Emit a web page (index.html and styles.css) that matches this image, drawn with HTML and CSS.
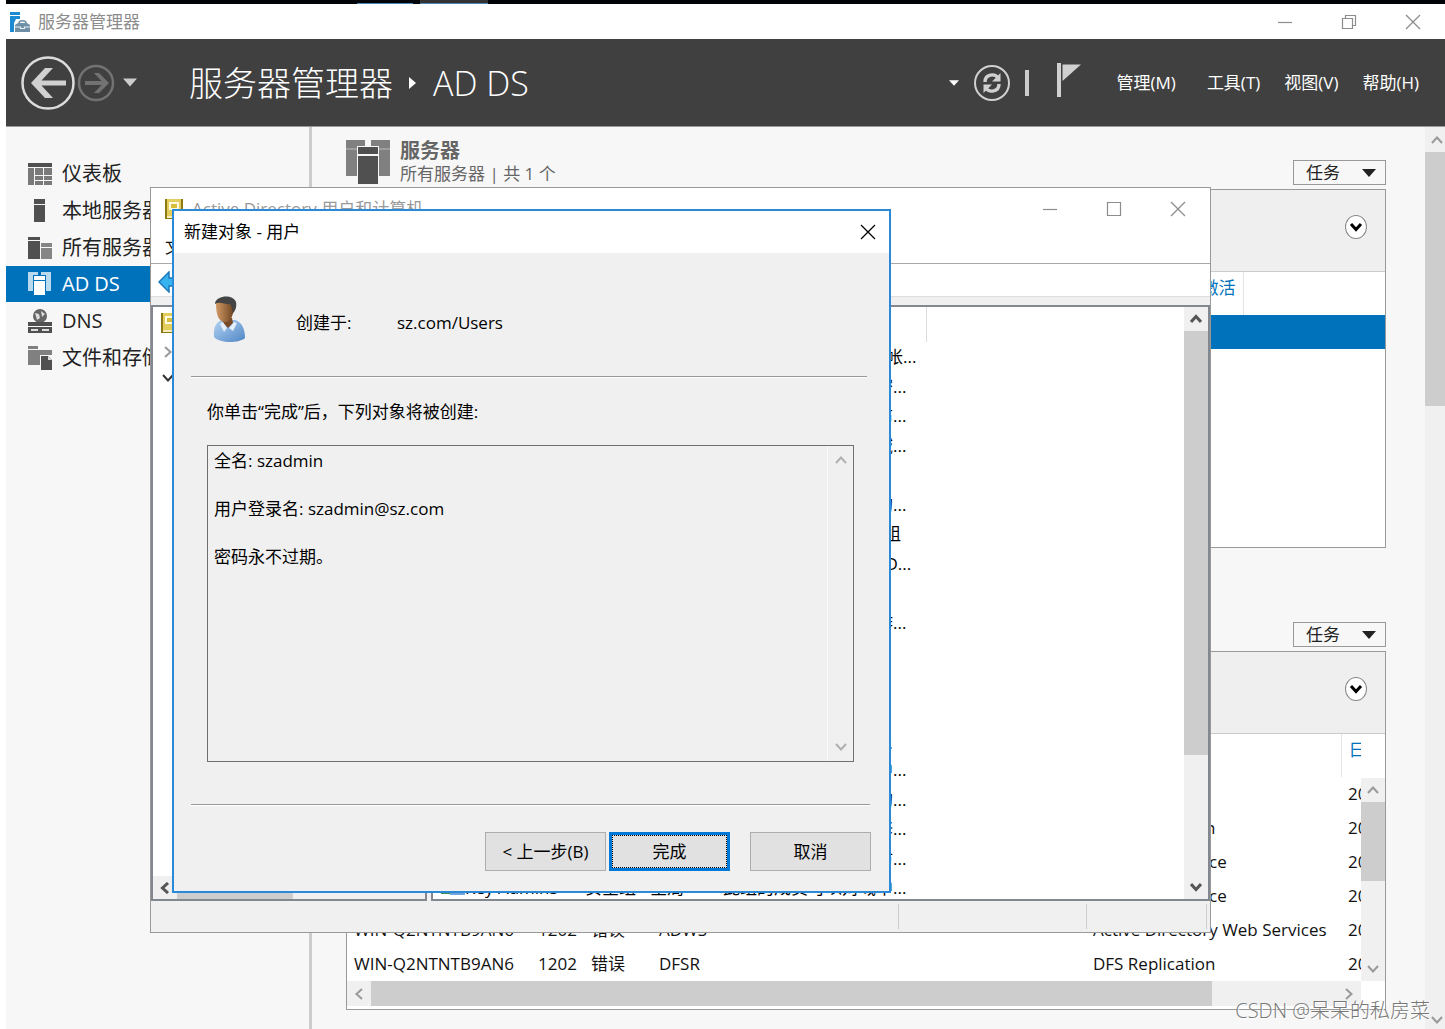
FILE: index.html
```html
<!DOCTYPE html>
<html lang="zh-CN">
<head>
<meta charset="utf-8">
<meta name="viewport" content="width=device-width, initial-scale=1">
<title>服务器管理器</title>
<link rel="stylesheet" href="styles.css">
</head>
<body>
<svg class="defs" aria-hidden="true">
  <symbol id="chev-up" viewBox="0 0 12 12"><path d="M1 9 6 3.5 11 9" fill="none" stroke="currentColor"/></symbol>
  <symbol id="chev-down" viewBox="0 0 12 12"><path d="M1 3 6 8.5 11 3" fill="none" stroke="currentColor"/></symbol>
  <symbol id="chev-left" viewBox="0 0 12 12"><path d="M9 1 3.5 6 9 11" fill="none" stroke="currentColor"/></symbol>
  <symbol id="chev-right" viewBox="0 0 12 12"><path d="M3 1 8.5 6 3 11" fill="none" stroke="currentColor"/></symbol>
  <symbol id="close" viewBox="0 0 16 16"><path d="M1 1 15 15M15 1 1 15" fill="none" stroke="currentColor" stroke-width="1.3"/></symbol>
  <symbol id="min" viewBox="0 0 16 16"><path d="M1 8.5H15" fill="none" stroke="currentColor" stroke-width="1.2"/></symbol>
  <symbol id="max" viewBox="0 0 16 16"><path d="M1.5 1.5h13v13h-13z" fill="none" stroke="currentColor" stroke-width="1.2"/></symbol>
  <symbol id="restore" viewBox="0 0 16 16"><path d="M1.5 4.5h10v10h-10zM4.5 4.500V1.500h10v10h-3" fill="none" stroke="currentColor" stroke-width="1.2"/></symbol>
  <symbol id="tri" viewBox="0 0 14 8"><path d="M0 0H14L7 8z" fill="currentColor"/></symbol>
  <symbol id="book" viewBox="0 0 18 22"><path d="M0 1h18v20H0z" fill="#8d7a14"/><path d="M2 1h14v17H2z" fill="#e3cd5d"/><path d="M4 4h10v8H4z" fill="#fffbe0"/><path d="M6 6h6v4H6z" fill="#d8bd3c"/><path d="M2 18h15v2H2z" fill="#f6eeb8"/></symbol>
</svg>

<div class="desktop">
  <div class="host-bar"><span class="host-tab"></span><span class="host-tab wide"></span></div>

  <div class="manager">
    <header class="titlebar">
      <svg class="app-icon" viewBox="0 0 20 20"><path d="M0 0h10v3H0zM0 4h10v3H6l-2 4v9H0z" fill="#1b8ad3"/><path d="M5 13l3-2h9l3 2v7H5z" fill="#6f8fa6"/><path d="M9 11c0-3 7-3 7 0" fill="none" stroke="#6f8fa6" stroke-width="1.500"/><path d="M5 15h5.500v1.500h4V15H20" fill="none" stroke="#e6eef4" stroke-width="1.200"/></svg>
      <span class="titlebar-text">服务器管理器</span>
      <div class="win-buttons">
        <button aria-label="最小化"><svg><use href="#min"/></svg></button>
        <button aria-label="还原"><svg><use href="#restore"/></svg></button>
        <button aria-label="关闭"><svg><use href="#close"/></svg></button>
      </div>
    </header>

    <div class="banner">
      <button class="plain" aria-label="后退"><svg width="54" height="54" viewBox="0 0 54 54"><circle cx="27" cy="27" r="25.500" fill="none" stroke="#dcdcdc" stroke-width="2.500"/><path d="M10 27 24 12h8L20.500 24.500H45v5H20.500L32 42h-8z" fill="#d0d0d0"/></svg></button>
      <button class="plain fwd" aria-label="前进"><svg width="38" height="38" viewBox="0 0 38 38"><circle cx="19" cy="19" r="17" fill="none" stroke="#727272" stroke-width="2.500"/><path d="M32 19 22 9h-5l7.500 8H8v4h16.500L17 29h5z" fill="#727272"/></svg></button>
      <button class="plain hist" aria-label="历史记录"><svg width="14" height="9"><use href="#tri"/></svg></button>
      <h1 class="crumbs"><span>服务器管理器</span><svg width="8" height="12" viewBox="0 0 8 12"><path d="M0 0 7 6 0 12z" fill="#fff"/></svg><span>AD DS</span></h1>
      <button class="plain white" aria-label="更多"><svg width="10" height="6"><use href="#tri"/></svg></button>
      <button class="plain refresh" aria-label="刷新"><svg width="38" height="38" viewBox="0 0 38 38"><circle cx="19" cy="19" r="17" fill="none" stroke="#d0d0d0" stroke-width="2"/><path d="M12 18c0-8 10-9 13-4M26 20c0 8-10 9-13 4" fill="none" stroke="#d0d0d0" stroke-width="3.400"/><path d="M27.500 9v8.500H19zM10.500 29v-8.500H19z" fill="#d0d0d0"/></svg></button>
      <span class="bar"></span>
      <button class="plain flag" aria-label="通知"><svg width="26" height="36" viewBox="0 0 26 36"><path d="M1 1h4v34H1z" fill="#d0d0d0"/><path d="M6.500 2.500H25L6.500 19z" fill="#d0d0d0"/></svg></button>
      <nav class="menus"><button>管理(M)</button><button>工具(T)</button><button>视图(V)</button><button>帮助(H)</button></nav>
    </div>

    <div class="workspace">
      <nav class="sidebar">
        <a href="#dashboard"><svg viewBox="0 0 24 24"><path d="M0 1h24v4H0z" fill="#505050"/><path d="M0 6h6v17H0zM7 6h8v7H7zM16 6h8v7h-8zM7 14h8v4H7zM16 14h8v4h-8zM7 19h8v4H7zM16 19h8v4h-8z" fill="#7a7a7a"/></svg>仪表板</a>
        <a href="#local"><svg viewBox="0 0 24 24"><path d="M6 0h11v5H6zM6 6h11v17H6z" fill="#505050"/></svg>本地服务器</a>
        <a href="#all"><svg viewBox="0 0 24 24"><path d="M0 1h12v3H0zM0 5h12v18H0z" fill="#505050"/><path d="M13 7h11v4H13zM13 12h11v11H13z" fill="#858585"/></svg>所有服务器</a>
        <a href="#adds" class="current"><svg viewBox="0 0 24 24"><path d="M0 0h10v3H5v16H0zM13 0h10v19h-5V3h-5z" fill="#b9d9ef"/><path d="M6 4h11v4H6zM6 9h11v14H6z" fill="#fff"/></svg>AD DS</a>
        <a href="#dns"><svg viewBox="0 0 24 24"><circle cx="12" cy="7" r="7" fill="#666"/><path d="M7 4l4 1 1 4-3 2zM13 2l4 3-3 3z" fill="#ddd"/><path d="M0 13h24v4H0zM0 18h24v6H0z" fill="#505050"/><path d="M3 20h7v2H3zM14 20h7v2h-7z" fill="#ddd"/></svg>DNS</a>
        <a href="#files"><svg viewBox="0 0 24 24"><path d="M0 0h10v3H0zM0 4h24v5H12v10H0z" fill="#808080"/><path d="M13 10h7l4 4v10H13z" fill="#505050"/><path d="M20 10v4h4z" fill="#ddd"/></svg>文件和存储服务</a>
      </nav>

      <main class="content">
        <section class="tile">
          <div class="tile-head">
            <svg width="44" height="46" viewBox="0 0 44 46"><path d="M0 1h19v6h-8v30H0zM25 1h19v36H33V7h-8z" fill="#808080"/><path d="M0 10h11M33 10h11" stroke="#bbb"/><path d="M12 8h20v7H12zM12 17h20v28H12z" fill="#505050"/></svg>
            <div class="tile-title"><h2>服务器</h2><p>所有服务器 | 共 1 个</p></div>
            <button class="tasks">任务<svg width="14" height="8"><use href="#tri"/></svg></button>
          </div>
          <div class="box">
            <div class="filter"><button class="expand" aria-label="展开"><svg width="14" height="12"><use href="#chev-down"/></svg></button></div>
            <table class="servers">
              <colgroup><col class="w-main"><col></colgroup>
              <thead><tr><th class="end">Windows 激活</th><th></th></tr></thead>
              <tbody><tr class="selected"><td></td><td></td></tr></tbody>
            </table>
          </div>
        </section>

        <section class="tile events-tile">
          <div class="tile-head"><button class="tasks">任务<svg width="14" height="8"><use href="#tri"/></svg></button></div>
          <div class="box">
            <div class="filter"><button class="expand" aria-label="展开"><svg width="14" height="12"><use href="#chev-down"/></svg></button></div>
            <div class="events">
              <div class="clip">
                <table class="event-table">
                  <colgroup><col class="w-name"><col class="w-id"><col class="w-sev"><col class="w-src"><col class="w-log"><col></colgroup>
                  <thead><tr><th></th><th></th><th></th><th></th><th></th><th>日期</th></tr></thead>
                  <tbody>
                    <tr><td></td><td></td><td></td><td></td><td></td><td>2023</td></tr>
                    <tr><td></td><td></td><td></td><td></td><td>DFS Replication</td><td>2023</td></tr>
                    <tr><td></td><td></td><td></td><td></td><td>Directory Service</td><td>2023</td></tr>
                    <tr><td></td><td></td><td></td><td></td><td>Directory Service</td><td>2023</td></tr>
                    <tr><td>WIN-Q2NTNTB9AN6</td><td>1202</td><td>错误</td><td>ADWS</td><td>Active Directory Web Services</td><td>2023</td></tr>
                    <tr><td>WIN-Q2NTNTB9AN6</td><td>1202</td><td>错误</td><td>DFSR</td><td>DFS Replication</td><td>2023</td></tr>
                  </tbody>
                </table>
              </div>
              <div class="vscroll events-v"><svg><use href="#chev-up"/></svg><i></i><svg><use href="#chev-down"/></svg></div>
            </div>
            <div class="hscroll"><svg><use href="#chev-left"/></svg><i></i><svg><use href="#chev-right"/></svg></div>
          </div>
        </section>
      </main>
      <div class="vscroll page-v"><svg><use href="#chev-up"/></svg><i></i><svg><use href="#chev-down"/></svg></div>
    </div>
  </div>

  <section class="window aduc">
    <header class="aduc-title">
      <svg class="book"><use href="#book"/></svg><span>Active Directory 用户和计算机</span>
      <div class="win-buttons">
        <button aria-label="最小化"><svg><use href="#min"/></svg></button>
        <button aria-label="最大化"><svg><use href="#max"/></svg></button>
        <button aria-label="关闭"><svg><use href="#close"/></svg></button>
      </div>
    </header>
    <div class="aduc-menu"><button>文件(F)</button></div>
    <div class="toolbar"><button class="plain" aria-label="后退"><svg width="22" height="22" viewBox="0 0 22 22"><path d="M1 11 11 1v6h10v8H11v6z" fill="#37b4f0" stroke="#1c78ba" stroke-width="1.500"/></svg></button></div>
    <div class="panes">
      <div class="tree">
        <svg class="book"><use href="#book"/></svg>
        <svg class="node"><use href="#chev-right"/></svg>
        <svg class="node open"><use href="#chev-down"/></svg>
        <div class="tree-scroll"><svg><use href="#chev-left"/></svg><i></i></div>
      </div>
      <div class="list">
        <div class="clip">
          <table class="objects">
            <colgroup><col class="w-obj"><col class="w-type"><col class="w-desc"><col></colgroup>
            <thead><tr><th></th><th></th><th></th><th></th></tr></thead>
            <tbody>
              <tr><td></td><td></td><td>管理计算机(域)的内置帐...</td></tr>
              <tr><td></td><td></td><td>允许将此组中成员的密...</td></tr>
              <tr><td></td><td></td><td>此组的成员被允许发布...</td></tr>
              <tr><td></td><td></td><td>可以克隆此组中作为域...</td></tr>
              <tr><td></td><td></td><td></td></tr>
              <tr><td></td><td></td><td>不允许将此组中成员的...</td></tr>
              <tr><td></td><td></td><td>DNS Administrators 组</td></tr>
              <tr><td></td><td></td><td>允许替其他客户端(如 D...</td></tr>
              <tr><td></td><td></td><td></td></tr>
              <tr><td></td><td></td><td>加入到域中的所有工作...</td></tr>
              <tr><td></td><td></td><td></td></tr>
              <tr><td></td><td></td><td></td></tr>
              <tr><td></td><td></td><td></td></tr>
              <tr><td></td><td></td><td>企业的指定系统管理员</td></tr>
              <tr><td></td><td></td><td>此组的成员可以对林中...</td></tr>
              <tr><td></td><td></td><td>该组的成员是企业中的...</td></tr>
              <tr><td></td><td></td><td>这个组中的成员可以修...</td></tr>
              <tr><td></td><td></td><td>供来宾访问计算机或访...</td></tr>
              <tr><td><svg class="group" viewBox="0 0 24 20"><path d="M0 18c0-9 12-9 12 0z" fill="#3f8f4a"/><path d="M9 19c0-12 15-12 15 0z" fill="#6fa5d8"/><circle cx="6" cy="7" r="4" fill="#555"/><circle cx="16" cy="6" r="4" fill="#c8a27a"/></svg>Key Admins</td><td>安全组 - 全局</td><td>此组的成员可以对域中...</td></tr>
            </tbody>
          </table>
        </div>
        <div class="vscroll list-v"><svg><use href="#chev-up"/></svg><i></i><svg><use href="#chev-down"/></svg></div>
      </div>
    </div>
    <footer class="status"><span></span><span></span><span></span></footer>
  </section>

  <form class="window dialog" role="dialog" aria-labelledby="dialog-title">
    <header class="dialog-title">
      <h2 id="dialog-title">新建对象 - 用户</h2>
      <button type="button" class="plain" aria-label="关闭"><svg width="16" height="16"><use href="#close"/></svg></button>
    </header>
    <div class="dialog-body">
      <div class="where">
        <svg width="34" height="46" viewBox="0 0 34 46">
          <defs><linearGradient id="skin"><stop offset="0" stop-color="#d39b66"/><stop offset="1" stop-color="#6b4220"/></linearGradient><linearGradient id="shirt" x2="1" y2="1"><stop offset="0" stop-color="#b5d4f3"/><stop offset="1" stop-color="#4f86c6"/></linearGradient></defs>
          <path d="M2 41C1 30 5 25 11 24l12 0c7 2 10 9 10 18-5 5-25 6-31-1z" fill="url(#shirt)"/>
          <path d="M10 22h10l1 5-5 5-5-5z" fill="#7a4b28"/><path d="M11 26l4 6-3 4-4-8zM22 26l-5 6 4 3 4-8z" fill="#e4effa"/>
          <path d="M4 8C4 1 22 0 22 9c0 9-3 17-9 17C6 26 4 17 4 8z" fill="url(#skin)"/>
          <path d="M3 7C5-1 21-2 24 6c1 5-1 9-3 11-1-4-1-7-3-9C13 9 8 5 3 8z" fill="#444"/>
        </svg>
        <span class="where-label">创建于:</span><span>sz.com/Users</span>
      </div>
      <hr>
      <label class="prompt" for="summary">你单击“完成”后，下列对象将被创建:</label>
      <div class="summary">
        <textarea id="summary" readonly>全名: szadmin

用户登录名: szadmin@sz.com

密码永不过期。</textarea>
        <div class="vscroll sum-v"><svg><use href="#chev-up"/></svg><svg><use href="#chev-down"/></svg></div>
      </div>
      <hr class="low">
      <div class="actions">
        <button type="button">&lt; 上一步(B)</button>
        <button type="button" class="default">完成</button>
        <button type="button" class="cancel">取消</button>
      </div>
    </div>
  </form>

  <div class="watermark">CSDN @呆呆的私房菜</div>
</div>
</body>
</html>
```
FILE: styles.css
```css
* { box-sizing: border-box; }

body {
  margin: 0;
  overflow: hidden;
  background: #fff;
  color: #111;
  font: 17px/24px "Open Sans", "Noto Sans CJK SC", sans-serif;
}

h1, h2, p { margin: 0; font-weight: 400; }
button { font: inherit; color: inherit; border: 0; background: none; padding: 0; }
svg { display: block; flex: none; }
table { width: 100%; border-collapse: collapse; table-layout: fixed; }
th, td { padding: 0; text-align: left; font-weight: 400; white-space: nowrap; }
.defs { position: absolute; width: 0; height: 0; }
.plain { display: flex; flex: none; }
.clip { overflow: hidden; min-width: 0; }

.desktop {
  position: relative;
  display: flex;
  flex-direction: column;
  height: 100vh;
  padding-left: 6px;
  overflow: hidden;
}

.host-bar { display: flex; gap: 7px; height: 4px; flex: none; padding-left: 351px; background: #000308; }
.host-tab { width: 56px; border-bottom: 1px solid #4b86b8; }
.host-tab.wide { width: 68px; background: #333; }

/* Server manager window */
.manager { flex: 1; display: flex; flex-direction: column; min-height: 0; }
.titlebar { display: flex; align-items: center; height: 35px; flex: none; padding: 1px 0 0 4px; color: #8c8c8c; }
.app-icon { width: 20px; height: 20px; margin-right: 8px; }
.win-buttons { display: flex; margin-left: auto; color: #8c8c8c; }
.win-buttons button { display: grid; place-items: center; width: 64px; height: 34px; }
.win-buttons svg { width: 16px; height: 16px; }

.banner {
  display: flex;
  align-items: center;
  flex: none;
  height: 88px;
  padding: 0 26px 0 15px;
  background: #404040;
  border-bottom: 1px solid #999;
  color: #fff;
}
.fwd { margin-left: 2px; }
.hist { margin: 0 52px 0 8px; color: #ccc; }
.crumbs { display: flex; align-items: center; gap: 16px; margin-right: auto; font-size: 34px; line-height: 44px; font-weight: 300; white-space: nowrap; }
.refresh { margin: 0 14px; }
.bar { width: 4px; height: 26px; background: #ccc; margin-right: 27px; }
.flag { margin: -6px 35px 0 0; }
.menus { display: flex; gap: 24px; white-space: nowrap; }
.menus button:first-child { margin-right: 7px; }

.workspace { flex: 1; display: flex; min-height: 0; background: #f7f7f7; }
.sidebar { flex: none; width: 306px; padding-top: 28px; border-right: 3px solid #ccc; font-size: 20px; }
.sidebar a { display: flex; align-items: center; gap: 10px; height: 37px; padding-left: 22px; color: #222; text-decoration: none; white-space: nowrap; }
.sidebar svg { width: 24px; height: 24px; }
.sidebar .current { height: 36px; background: #0072bc; color: #fff; }

.content { flex: 1; min-width: 0; padding: 12px 39px 0 34px; }
.tile-head { display: flex; height: 50px; color: #666; }
.tile-title { margin-left: 10px; }
.tile-title h2 { font-size: 20px; line-height: 23px; font-weight: 700; }
.tasks { display: flex; align-items: center; justify-content: space-between; width: 93px; height: 25px; margin: 21px 0 0 auto; padding: 0 9px 0 12px; border: 1px solid #999; color: #222; }
.box { min-height: 359px; border: 1px solid #999; background: #fff; }
.events-tile { margin-top: 74px; }
.events-tile .tile-head { height: 29px; }
.events-tile .tasks { margin-top: 0; }
.filter { display: flex; justify-content: flex-end; align-items: center; height: 82px; padding: 0 18px 8px 0; background: #efefef; border-bottom: 1px solid #ccc; }
.expand { display: grid; place-items: center; width: 22px; height: 24px; border: 1px solid #888; border-radius: 50%; background: #fff; color: #000; }
.expand svg { stroke-width: 3; }

.servers th, .event-table th { height: 43px; padding: 4px 7px; vertical-align: top; color: #0072bc; border-right: 1px solid #e4e4e4; }
.servers th:last-child, .event-table th:last-child { border: 0; }
.servers .end { text-align: right; }
.servers td { height: 34px; }
.selected { background: #0072bc; }
.w-main { width: 896px; }

.events { display: flex; }
.events .clip { flex: 1; }
.event-table td { height: 34px; padding-left: 7px; }
.w-name { width: 184px; }
.w-id { width: 53px; }
.w-sev { width: 68px; }
.w-src { width: 434px; }
.w-log { width: 255px; }

/* Scroll bars */
.vscroll { display: flex; flex-direction: column; align-items: center; flex: none; width: 24px; background: #f0f0f0; color: #999; stroke-width: 2; }
.vscroll svg { width: 12px; height: 12px; margin: 6px 0; }
.vscroll svg:last-child { margin-top: auto; }
.vscroll i { width: 100%; background: #cdcdcd; }
.events-v { margin-top: 44px; }
.events-v i { height: 79px; }
.page-v { width: 20px; align-items: flex-end; }
.page-v svg { margin: 7px 2px 6px 0; }
.page-v svg:last-child { margin-bottom: 3px; }
.page-v i { height: 254px; }
.hscroll { display: flex; align-items: center; height: 25px; margin-right: 24px; background: #f0f0f0; color: #999; stroke-width: 2; }
.hscroll svg { width: 12px; height: 12px; margin: 0 6px; }
.hscroll svg:last-child { margin-left: auto; }
.hscroll i { width: 841px; height: 100%; background: #cdcdcd; }

/* Floating windows */
.window { position: absolute; display: flex; flex-direction: column; }

.aduc { left: 150px; top: 187px; width: 1061px; height: 746px; border: 1px solid #999; background: #f0f0f0; }
.aduc-title { display: flex; align-items: center; height: 42px; padding-left: 14px; background: #fff; color: #999; }
.aduc-title span { margin-left: 9px; }
.book { width: 18px; height: 22px; }
.aduc-menu { height: 34px; padding: 5px 14px; background: #fff; border-bottom: 1px solid #aaa; }
.toolbar { height: 33px; padding: 7px; background: #fff; border-bottom: 1px solid #ddd; }
.panes { flex: 1; display: flex; gap: 4px; min-height: 0; padding-top: 8px; }
.tree, .list { border: 2px solid #828790; background: #fff; min-height: 0; }
.tree { display: flex; flex-direction: column; width: 276px; color: #999; }
.tree .book { margin: 5px 0 12px 8px; }
.node { width: 12px; height: 12px; margin: 0 0 14px 9px; stroke-width: 2; }
.node.open { color: #333; }
.tree-scroll { display: flex; align-items: center; height: 23px; margin-top: auto; background: #f0f0f0; color: #555; stroke-width: 3; }
.tree-scroll svg { width: 12px; height: 12px; margin: 0 6px; }
.tree-scroll i { width: 116px; height: 100%; background: #cdcdcd; }
.list { flex: 1; display: flex; min-width: 0; }
.list .clip { flex: 1; }
.objects th { height: 35px; }
.objects th:nth-child(3) { border-right: 1px solid #ddd; }
.objects td { height: 30px; padding-left: 8px; color: #000; }
.objects tr:nth-child(even) td { height: 29px; }
.group { width: 24px; height: 20px; float: left; }
.w-obj { width: 144px; }
.w-type { width: 138px; }
.w-desc { width: 211px; }
.list-v { color: #555; stroke-width: 3; }
.list-v i { height: 424px; }
.status { display: flex; height: 31px; padding: 3px; }
.status span { border-right: 1px solid #ccc; width: 120px; }
.status span:first-child { flex: 1; }
.status span:nth-child(2) { width: 188px; }

.dialog { left: 172px; top: 209px; width: 719px; height: 684px; border: 2px solid #2a8ad8; background: #f0f0f0; color: #000; }
.dialog-title { display: flex; align-items: center; justify-content: space-between; height: 42px; padding: 0 13px 0 10px; background: #fff; }
.dialog-title h2 { font-size: 17px; }
.dialog-body { flex: 1; padding: 43px 18px 0 17px; }
.where { display: flex; align-items: center; height: 54px; margin-bottom: 26px; padding-left: 21px; }
.where svg { margin-bottom: 8px; }
.where-label { width: 101px; margin-left: 50px; }
hr { height: 2px; margin: 0 4px 0 0; border: 0; border-top: 1px solid #999; background: #fff; }
.prompt { display: block; margin: 22px 16px 21px; }
.summary { display: flex; height: 317px; margin: 0 17px 0 16px; border: 1px solid #707070; }
.summary textarea { flex: 1; padding: 3px 6px; border: 0; outline: 0; resize: none; background: none; font: inherit; color: inherit; overflow: hidden; }
.sum-v { padding: 2px 0; border-left: 1px solid #fafafa; color: #b0b0b0; width: 26px; }
hr.low { margin: 42px 1px 26px 0; }
.actions { display: flex; justify-content: flex-end; gap: 3px; }
.actions button { width: 121px; height: 39px; background: #e1e1e1; border: 1px solid #adadad; }
.actions .default { border: 3px solid #0078d7; outline: 1px dotted #000; outline-offset: -4px; }
.actions .cancel { margin-left: 17px; }

.watermark { position: absolute; right: 15px; bottom: 4px; font-size: 20px; line-height: 28px; font-weight: 300; color: #777; text-shadow: 1px 1px 0 #fff; white-space: nowrap; }
```
